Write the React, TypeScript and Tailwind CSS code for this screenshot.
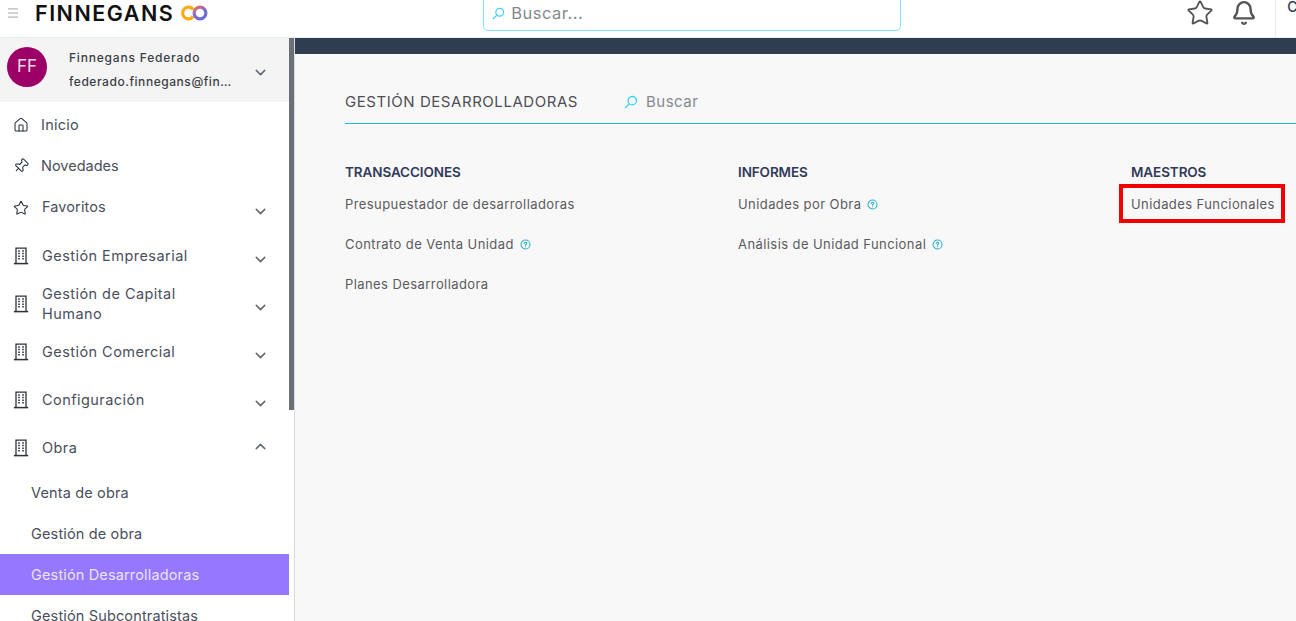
import React from "react";
import { ChevronDown, ChevronUp, Home, Pin, Star, Bell, Menu } from "lucide-react";

const font = "font-['Inter','Liberation_Sans',sans-serif]";

function SearchIcon({ size = 15 }: { size?: number }) {
  return (
    <svg width={size} height={size} viewBox="0 0 16 16" fill="none" stroke="#3fd4f5" strokeWidth="1.5" strokeLinecap="round" className="shrink-0" aria-hidden="true">
      <circle cx="9.5" cy="6.5" r="4.8" />
      <line x1="5.8" y1="10.2" x2="1.5" y2="14.5" />
    </svg>
  );
}

function HelpIcon() {
  return (
    <svg width="11" height="11" viewBox="0 0 12 12" fill="none" stroke="#2fb4d6" strokeWidth="1.2" strokeLinecap="round" className="-mt-[1px] shrink-0" aria-hidden="true">
      <circle cx="6" cy="6" r="4.9" />
      <path d="M4.6 4.8c0-.8.6-1.3 1.4-1.3s1.4.5 1.4 1.2c0 1-1.4 1-1.4 2" />
      <line x1="6" y1="8.4" x2="6" y2="8.5" />
    </svg>
  );
}

function BuildingIcon() {
  return (
    <svg width="16" height="18" viewBox="0 0 16 18" fill="none" stroke="#2b3340" strokeWidth="1.3" className="shrink-0" aria-hidden="true">
      <path d="M3 17V1.2h10V17" />
      <line x1="0.8" y1="16.6" x2="15.2" y2="16.6" strokeWidth="1.5" />
      <path d="M5.2 4h1.6M9.2 4h1.6M5.2 6.6h1.6M9.2 6.6h1.6M5.2 9.2h1.6M9.2 9.2h1.6M5.2 11.8h1.6M9.2 11.8h1.6" strokeWidth="1.5" />
    </svg>
  );
}

function Logo() {
  return (
    <svg width="27" height="16" viewBox="0 0 27 16" fill="none" strokeWidth="3.2" aria-hidden="true">
      <defs>
        <linearGradient id="ring" x1="0" y1="0" x2="0.6" y2="1">
          <stop offset="0" stopColor="#f5704f" />
          <stop offset="0.55" stopColor="#7a68d6" />
          <stop offset="1" stopColor="#6a6fd0" />
        </linearGradient>
      </defs>
      <path d="M12.2 4.4A5.9 5.9 0 1 0 12.2 11.6" stroke="#fbab18" />
      <circle cx="19" cy="8" r="5.9" stroke="url(#ring)" />
    </svg>
  );
}

function ModuleRow({ label, open }: { label: string; open?: boolean }) {
  return (
    <div className="flex h-12 shrink-0 items-center pl-[13px] pr-5">
      <BuildingIcon />
      <span className="ml-[13px] max-w-[180px] flex-1 text-[14.5px] leading-5 tracking-[0.45px] text-[#4a4f5c]">{label}</span>
      {open ? (
        <ChevronUp size={17} strokeWidth={2} className="ml-auto -mt-1 text-[#5f6670]" />
      ) : (
        <ChevronDown size={17} strokeWidth={2} className="ml-auto mt-[6px] text-[#5f6670]" />
      )}
    </div>
  );
}

function SubRow({ label, active }: { label: string; active?: boolean }) {
  return (
    <div className={`flex h-[41px] shrink-0 items-center pl-[31px] text-[14.5px] tracking-[0.15px] ${active ? "bg-[#9678ff] text-[#e9e4ff]" : "text-[#4a4f5c]"}`}>
      {label}
    </div>
  );
}

function LinkItem({ label, help }: { label: string; help?: boolean }) {
  return (
    <div className="flex h-10 items-center gap-[6px] text-[13px] tracking-[0.42px] text-[#5b5b5f]">
      <span>{label}</span>
      {help && <HelpIcon />}
    </div>
  );
}

function Column({ title, children }: { title: string; children: React.ReactNode }) {
  return (
    <div className="w-[393px] shrink-0">
      <div className="mb-[3px] text-[13.5px] font-semibold leading-5 tracking-[-0.1px] text-[#323a5a]">{title}</div>
      {children}
    </div>
  );
}

export default function App() {
  return (
    <div className={`${font} flex h-[621px] w-[1296px] flex-col overflow-hidden bg-white`}>
      {/* Top bar */}
      <header className="flex h-[38px] shrink-0 items-start border-b border-[#e6f0ee] bg-white">
        <Menu size={14} strokeWidth={1.5} className="ml-[6px] mt-[6px] shrink-0 text-[#9a9a9a]" />
        <span className="ml-[15px] mt-[-1px] shrink-0 text-[21.5px] font-semibold leading-[28px] tracking-[1.5px] text-[#111]">FINNEGANS</span>
        <div className="ml-[7px] mt-[5px] shrink-0">
          <Logo />
        </div>
        <div className="ml-[275px] mt-[-8px] flex h-[39px] w-[418px] shrink-0 items-center rounded-[5px] border border-[#7fe3fb] pl-2 pt-[3px]">
          <SearchIcon size={13} />
          <span className="ml-[6px] text-[16.5px] tracking-[0.5px] text-[#85898f]">Buscar...</span>
        </div>
        <Star size={28} strokeWidth={1.6} className="ml-[285px] -mt-[1px] shrink-0 text-[#555]" />
        <Bell size={26} strokeWidth={2.2} className="ml-[17px] shrink-0 text-[#555]" />
        <div className="ml-[18px] h-[37px] w-[1px] shrink-0 bg-[#ececec]" />
        <span className="ml-[11px] mt-[-3px] shrink-0 text-[14px] font-medium leading-5 text-[#323a5a]">C</span>
      </header>

      <div className="flex min-h-0 flex-1">
        {/* Sidebar */}
        <aside className="flex w-[295px] shrink-0 border-r border-[#d9d9d9]">
          <nav className="flex w-[289px] shrink-0 flex-col">
            <div className="flex h-16 shrink-0 items-center bg-[#f4f4f4] pl-[7px] pr-5">
              <div className="-mt-[6px] flex h-10 w-10 shrink-0 items-center justify-center rounded-full bg-[#9c0066] text-[17px] text-[#f3dbe9]">FF</div>
              <div className="ml-[22px] w-[167px] text-[12px] font-medium leading-6 tracking-[0.55px] text-[#3b3f47]">
                <div className="tracking-[0.8px]">Finnegans Federado</div>
                <div className="truncate">federado.finnegans@finnegans.com</div>
              </div>
              <ChevronDown size={17} strokeWidth={2} className="ml-auto mt-1 text-[#5f6670]" />
            </div>
            <div className="flex h-[41px] shrink-0 items-center pl-[13px] pt-[5px] text-[14.5px] tracking-[0.25px] text-[#4a4f5c]">
              <Home size={16} strokeWidth={1.6} className="text-[#2b3340]" />
              <span className="ml-[12px]">Inicio</span>
            </div>
            <div className="flex h-[41px] shrink-0 items-center pl-[13px] pt-[5px] text-[14.5px] tracking-[0px] text-[#4a4f5c]">
              <Pin size={16} strokeWidth={1.6} className="rotate-45 text-[#2b3340]" />
              <span className="ml-[12px]">Novedades</span>
            </div>
            <div className="flex h-12 shrink-0 items-center pl-[13px] pr-5 text-[14.5px] tracking-[0.1px] text-[#4a4f5c]">
              <Star size={16} strokeWidth={1.6} className="-mt-[1px] text-[#2b3340]" />
              <span className="ml-[13px] -mt-[2px]">Favoritos</span>
              <ChevronDown size={17} strokeWidth={2} className="ml-auto mt-[6px] text-[#5f6670]" />
            </div>
            <ModuleRow label="Gestión Empresarial" />
            <ModuleRow label="Gestión de Capital Humano" />
            <ModuleRow label="Gestión Comercial" />
            <ModuleRow label="Configuración" />
            <ModuleRow label="Obra" open />
            <SubRow label="Venta de obra" />
            <SubRow label="Gestión de obra" />
            <SubRow label="Gestión Desarrolladoras" active />
            <SubRow label="Gestión Subcontratistas" />
          </nav>
          <div className="w-[5px] shrink-0">
            <div className="h-[372px] bg-[#6a6f78]" />
          </div>
        </aside>

        {/* Main */}
        <main className="relative min-w-0 flex-1 bg-[#f8f8f8]">
          <div className="h-4 bg-[#2f3d50]" />
          <div className="pl-[50px]">
            <div className="flex h-[70px] items-center border-b border-[#1cb8d8] pt-[27px]">
              <span className="text-[15px] tracking-[0.55px] text-[#4f4f53]">GESTIÓN DESARROLLADORAS</span>
              <span className="ml-[46px]"><SearchIcon size={14} /></span>
              <span className="ml-[8px] text-[15px] tracking-[0.5px] text-[#85898f]">Buscar</span>
            </div>
            <div className="mt-[38px] flex">
              <Column title="TRANSACCIONES">
                <LinkItem label="Presupuestador de desarrolladoras" />
                <LinkItem label="Contrato de Venta Unidad" help />
                <LinkItem label="Planes Desarrolladora" />
              </Column>
              <Column title="INFORMES">
                <LinkItem label="Unidades por Obra" help />
                <LinkItem label="Análisis de Unidad Funcional" help />
              </Column>
              <Column title="MAESTROS">
                <LinkItem label="Unidades Funcionales" />
              </Column>
            </div>
          </div>
          {/* Red highlight annotation */}
          <div className="absolute left-[824px] top-[146px] h-[39px] w-[166px] border-[4px] border-[#f00000]" />
        </main>
      </div>
    </div>
  );
}
